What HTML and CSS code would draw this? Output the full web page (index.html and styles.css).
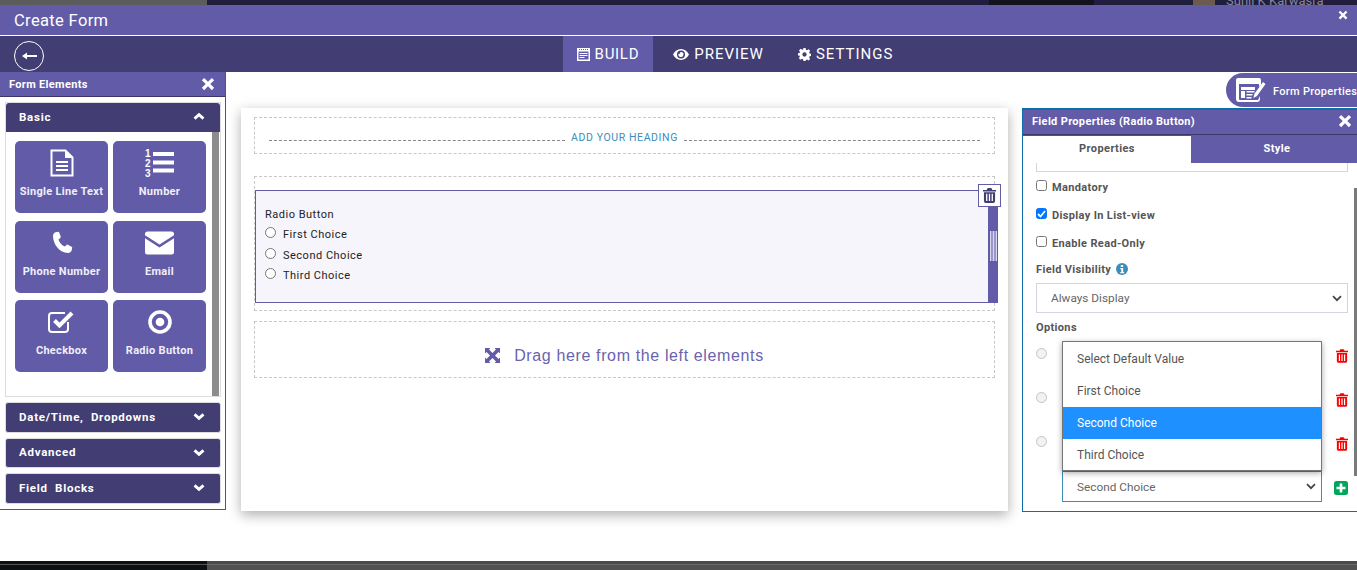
FILE: index.html
```html
<!DOCTYPE html>
<html lang="en">
<head>
<meta charset="utf-8">
<title>Create Form</title>
<link rel="stylesheet" href="styles.css">
</head>
<body>
<svg class="defs" width="0" height="0" aria-hidden="true">
  <symbol id="x" viewBox="0 0 16 16"><path d="M3.6 1 8 5.4 12.4 1 15 3.6 10.6 8 15 12.4 12.4 15 8 10.600 3.600 15 1 12.400 5.400 8 1 3.600z" fill="currentColor"/></symbol>
  <symbol id="up" viewBox="0 0 14 10"><path d="M1.800 7.500 7 2.800 12.200 7.500" fill="none" stroke="currentColor" stroke-width="3.400"/></symbol>
  <symbol id="down" viewBox="0 0 14 10"><path d="M1.800 2.500 7 7.200 12.200 2.500" fill="none" stroke="currentColor" stroke-width="3.400"/></symbol>
  <symbol id="trash" viewBox="0 0 14 16"><path fill="currentColor" d="M5 0h4l1 2h4v1.600H0V2h4zM1 4.500h12V14a2 2 0 0 1-2 2H3a2 2 0 0 1-2-2zm2.300 1.700v7.600h1.400V6.200zm3 0v7.600h1.400V6.200zm3 0v7.600h1.400V6.200z"/></symbol>
</svg>

<div class="backdrop-top">
  <span class="bt-gray"></span>
  <span class="bt-clock"></span>
  <span class="bt-avatar"></span>
  <span class="bt-name">Sunil K Karwasra</span>
</div>

<div class="modal">
  <header class="title-bar">
    <h1>Create Form</h1>
    <svg class="title-close"><use href="#x"/></svg>
  </header>
  <nav class="nav-bar">
    <button class="back" aria-label="Back">
      <svg width="15" height="10" viewBox="0 0 15 10"><path d="M15 5H2" fill="none" stroke="#fff" stroke-width="2"/><path d="M5 1.500v7L0 5z" fill="#fff"/></svg>
    </button>
    <div class="tabs">
      <a class="tab active">
        <svg width="13" height="13" viewBox="0 0 13 13"><path fill="#fff" fill-rule="evenodd" d="M0 0h13v13H0zM1.500 3.500v8h10v-8zM2.500 5h8v1h-8zm0 2h8v1h-8zm0 2h5v1h-5zM2 1v1h1V1zm2 0v1h1V1zm2 0v1h1V1zm2 0v1h1V1zm2 0v1h1V1z"/></svg>BUILD</a>
      <a class="tab">
        <svg width="16" height="11" viewBox="0 0 16 11"><path fill="#fff" fill-rule="evenodd" d="M8 0c3.500 0 6.300 2.200 8 5.500C14.300 8.800 11.500 11 8 11S1.700 8.800 0 5.500C1.700 2.200 4.500 0 8 0zm0 1.500a4 4 0 1 0 0 8 4 4 0 0 0 0-8zM8 3a2.500 2.500 0 1 1-2.300 1.500c.3.600 1.900.2 1.500-1.300.2-.1.500-.2.800-.2z"/></svg>PREVIEW</a>
      <a class="tab">
        <svg width="13" height="13" viewBox="0 0 24 24"><path fill="#fff" fill-rule="evenodd" d="M10 0h4l.7 3.300 2 .8 2.800-1.800 2.900 2.900-1.800 2.800.8 2 3.300.7v4l-3.300.7-.8 2 1.800 2.800-2.900 2.900-2.800-1.800-2 .8L14 24h-4l-.7-3.300-2-.8-2.800 1.800-2.900-2.900 1.800-2.800-.8-2L-.4 14v-4l3.300-.7.8-2L1.900 4.500l2.900-2.900 2.800 1.800 2-.8zM12 8a4 4 0 1 0 0 8 4 4 0 0 0 0-8z"/></svg>SETTINGS</a>
    </div>
  </nav>

  <div class="workspace">
    <aside class="elements">
      <div class="panel-head">
        <span>Form Elements</span>
        <svg class="panel-x"><use href="#x"/></svg>
      </div>
      <div class="accordion-open">
        <div class="acc-head"><span>Basic</span><svg class="chev"><use href="#up"/></svg></div>
        <div class="acc-body">
          <div class="grid">
            <div class="el">
              <svg width="24" height="28" viewBox="0 0 24 28"><path fill="none" stroke="#fff" stroke-width="2" d="M1.500 1.500h14l7 7v18h-21z"/><path fill="#fff" d="M15 1.500 22.500 9H15zM6 12h12v2H6zm0 4h12v2H6zm0 4h12v2H6z"/></svg>
              <span>Single Line Text</span>
            </div>
            <div class="el">
              <svg class="list-num" width="29" height="28" viewBox="0 0 29 28"><path fill="#fff" d="M8 3h21v4H8zm0 8.500h21v4H8zm0 8h21v4H8z"/><text x="0" y="7.500" class="num">1</text><text x="0" y="17.500" class="num">2</text><text x="0" y="27.500" class="num">3</text></svg>
              <span>Number</span>
            </div>
            <div class="el">
              <svg width="24" height="24" viewBox="0 0 24 24"><path fill="#fff" d="M5.500 1.200 8 .8c.6 0 1 .3 1.200.8l1.500 4c.2.500 0 1-.4 1.300L8.500 8.500c.8 2.800 3.500 6 6.300 7.100l1.700-1.700c.4-.4.900-.5 1.400-.2l3.700 2c.5.300.7.800.6 1.300l-.6 2.500c-.4 1.400-2 2.500-3.600 2.500C9.500 22 3 13 3 5c0-1.800 1-3.300 2.500-3.800z"/></svg>
              <span>Phone Number</span>
            </div>
            <div class="el">
              <svg width="29" height="23" viewBox="0 0 29 23"><path fill="#fff" d="M2.500 0h24A2.500 2.500 0 0 1 29 2.500v1.300L14.500 13 0 3.800V2.500A2.500 2.500 0 0 1 2.500 0zM0 6.800l14.500 9.200L29 6.800v13.700a2.500 2.500 0 0 1-2.500 2.500h-24A2.500 2.500 0 0 1 0 20.500z"/></svg>
              <span>Email</span>
            </div>
            <div class="el">
              <svg width="27" height="24" viewBox="0 0 27 24"><path fill="none" stroke="#fff" stroke-width="2" d="M20 12v7a3 3 0 0 1-3 3H4a3 3 0 0 1-3-3V6a3 3 0 0 1 3-3h13"/><path fill="none" stroke="#fff" stroke-width="4" d="m6.500 10.500 5 5L24 3"/></svg>
              <span>Checkbox</span>
            </div>
            <div class="el">
              <svg width="24" height="24" viewBox="0 0 24 24"><circle cx="12" cy="12" r="10" fill="none" stroke="#fff" stroke-width="3.600"/><circle cx="12" cy="12" r="4.300" fill="#fff"/></svg>
              <span>Radio Button</span>
            </div>
          </div>
          <div class="el-scroll"></div>
        </div>
      </div>
      <div class="acc-closed"><span>Date/Time,&nbsp; Dropdowns</span><svg class="chev"><use href="#down"/></svg></div>
      <div class="acc-closed short"><span>Advanced</span><svg class="chev"><use href="#down"/></svg></div>
      <div class="acc-closed"><span>Field&nbsp; Blocks</span><svg class="chev"><use href="#down"/></svg></div>
    </aside>

    <main class="canvas">
      <section class="sheet">
        <div class="heading-zone">
          <i class="dash"></i><span>ADD YOUR HEADING</span><i class="dash"></i>
        </div>
        <div class="field-zone">
          <div class="field">
            <div class="field-main">
              <div class="field-label">Radio Button</div>
              <label class="choice"><i class="ring"></i>First Choice</label>
              <label class="choice"><i class="ring"></i>Second Choice</label>
              <label class="choice"><i class="ring"></i>Third Choice</label>
            </div>
            <div class="handle"><i class="grip"></i></div>
            <button class="field-del" aria-label="Delete"><svg width="13" height="15"><use href="#trash"/></svg></button>
          </div>
        </div>
        <div class="drop-zone">
          <svg width="15" height="15" viewBox="0 0 15 15"><path fill="#625ba8" d="M0 0h5.500L4 1.500 7.500 5 10.900 1.500 9.500 0H15v5.500L13.500 4 10 7.500l3.500 3.500L15 9.500V15H9.500l1.500-1.500L7.500 10 4 13.500 5.500 15H0V9.500L1.500 11 5 7.500 1.500 4 0 5.500z"/></svg>
          <span>Drag here from the left elements</span>
        </div>
      </section>
    </main>

    <div class="right-col">
      <button class="form-props">
        <svg width="30" height="26" viewBox="0 0 30 26"><path fill="#fff" fill-rule="evenodd" d="M2 1h21a2 2 0 0 1 2 2v5l-2 2V7H3v15a1 1 0 0 0 1 1h18l2-4v3a3 3 0 0 1-3 3H3a3 3 0 0 1-3-3V3a2 2 0 0 1 2-2z"/><path fill="#fff" d="M5 10h14v3H5zm0 4h4v7H5zm5.500 0h8v1.500h-8zm0 3h6v1.500h-6zm0 3h5v1.500h-5z"/><path fill="#fff" d="M27 5l2.500 2-8.500 12-3.500 2 .8-4zM14 3h1.500v1.500H14zm3 0h1.500v1.500H17zm3 0h1.500v1.500H20z"/></svg>
        <span>Form Properties</span>
      </button>
      <aside class="props">
        <div class="props-head">
          <span>Field Properties (Radio Button)</span>
          <svg class="panel-x"><use href="#x"/></svg>
        </div>
        <div class="props-tabs">
          <div class="ptab active">Properties</div>
          <div class="ptab">Style</div>
        </div>
        <div class="props-body">
          <div class="cut-input"></div>
          <label class="check first"><i class="box"></i>Mandatory</label>
          <label class="check"><i class="box on"><svg width="9" height="8" viewBox="0 0 9 8"><path d="m1 4 2.500 2.500L8 1" fill="none" stroke="#fff" stroke-width="1.800"/></svg></i>Display In List-view</label>
          <label class="check"><i class="box"></i>Enable Read-Only</label>
          <div class="vis-label">Field Visibility
            <svg width="12" height="12" viewBox="0 0 12 12"><circle cx="6" cy="6" r="6" fill="#3c8dbc"/><path fill="#fff" d="M4.800 2h2.400v2H4.800zM4.300 5h2.900v4h1v1.300H4.300V9h1V6.300h-1z"/></svg>
          </div>
          <div class="select wide"><span>Always Display</span><svg width="10" height="7" viewBox="0 0 10 7"><path d="M1 1.200 5 5.200 9 1.200" fill="none" stroke="#444" stroke-width="1.700"/></svg></div>
          <div class="opt-label">Options</div>
          <div class="options">
            <div class="opt-radios"><i class="ghost"></i><i class="ghost"></i><i class="ghost"></i></div>
            <div class="opt-trash">
              <svg width="12" height="14"><use href="#trash"/></svg>
              <svg width="12" height="14"><use href="#trash"/></svg>
              <svg width="12" height="14"><use href="#trash"/></svg>
            </div>
            <div class="select current"><span>Second Choice</span><svg width="10" height="7" viewBox="0 0 10 7"><path d="M1 1.200 5 5.200 9 1.200" fill="none" stroke="#444" stroke-width="1.700"/></svg></div>
            <svg class="add" width="14" height="14" viewBox="0 0 14 14"><rect width="14" height="14" rx="2.500" fill="#00a65a"/><path d="M5.700 2.500h2.600v3.200h3.200v2.600H8.300v3.200H5.700V8.300H2.500V5.700h3.200z" fill="#fff"/></svg>
            <ul class="dropdown">
              <li>Select Default Value</li>
              <li>First Choice</li>
              <li class="sel">Second Choice</li>
              <li>Third Choice</li>
            </ul>
          </div>
          <div class="props-scroll"></div>
        </div>
      </aside>
    </div>
  </div>
</div>

<div class="backdrop-bottom"><span></span></div>
</body>
</html>
```

FILE: styles.css
```css
* { box-sizing: border-box; }
html, body { margin: 0; height: 570px; overflow: hidden; background: #fff; }
body { font-family: Roboto, "Liberation Sans", sans-serif; display: flex; flex-direction: column; color: #444; }
.defs { position: absolute; }
i { display: block; font-style: normal; }

.backdrop-top { height: 5px; background: #201d3e; display: flex; flex: none; overflow: hidden; align-items: flex-end; }
.bt-gray { width: 207px; height: 5px; background: #5c5c5c; flex: none; }
.bt-clock { width: 105px; height: 5px; margin-left: 782px; background: #15121f; flex: none; }
.bt-avatar { width: 22px; height: 5px; margin-left: 99px; background: #6a5a50; flex: none; }
.bt-name { margin-left: 11px; font-size: 13px; line-height: 5px; height: 5px; color: #86849e; white-space: nowrap; position: relative; top: -2px; flex: none; }

.modal { flex: 1; display: flex; flex-direction: column; min-height: 0; }

.title-bar { height: 30px; background: #625ba8; display: flex; align-items: center; justify-content: space-between; padding: 0 9px 0 14px; flex: none; }
.title-bar h1 { margin: 0; font-size: 16.500px; font-weight: 400; color: #fff; font-family: Roboto, sans-serif; letter-spacing: .35px; }
.title-close { width: 10px; height: 10px; color: #fff; margin-top: -10px; }

.nav-bar { height: 37px; background: #423d72; border-top: 1px solid #fff; position: relative; display: flex; justify-content: center; padding-left: 120px; flex: none; }
.back { position: absolute; left: 14px; top: 5px; width: 30px; height: 30px; border: 1px solid #fff; border-radius: 50%; background: none; padding: 0; display: flex; align-items: center; justify-content: center; }
.tabs { display: flex; }
.tab { display: flex; align-items: center; gap: 5px; padding: 0 13.500px; color: #fff; font-size: 15px; letter-spacing: 1px; margin-right: 7px; }
.tab.active { background: #625ba8; letter-spacing: .7px; }

.workspace { flex: 1; display: flex; min-height: 0; align-items: flex-start; }

.elements { width: 226px; height: 438px; flex: none; border-right: 1px solid #0f6ea6; border-bottom: 1px solid #0f6ea6; background: #fff; }
.panel-head { height: 25px; background: #625ba8; border-bottom: 1px solid #3b3768; display: flex; align-items: center; justify-content: space-between; padding: 0 10px 0 9px; color: #fff; font-weight: 700; font-size: 11px; letter-spacing: .33px; }
.panel-x { width: 14px; height: 14px; color: #fff; }

.accordion-open { margin: 5px 4px 0 5px; border: 1px solid #ddd; }
.acc-head { height: 29px; background: #423d72; color: #fff; display: flex; align-items: center; justify-content: space-between; padding: 0 15px 2px 13px; font-weight: 700; font-size: 11.500px; letter-spacing: .75px; border-radius: 3px 3px 0 0; }
.chev { width: 12px; height: 9px; color: #fff; }
.acc-body { height: 264px; display: flex; justify-content: space-between; padding: 9px 1px 0 9px; background: #fff; }
.grid { display: grid; grid-template-columns: 93px 93px; grid-auto-rows: 72px; column-gap: 5px; row-gap: 7.500px; align-content: start; }
.el { background: #625ba8; border-radius: 5px; color: #fff; font-size: 11px; font-weight: 700; letter-spacing: .3px; display: flex; flex-direction: column; align-items: center; }
.el svg { height: 28px; margin-top: 8px; margin-bottom: 8px; flex: none; }
.el svg.list-num { overflow: visible; }
.el span { line-height: 14px; white-space: nowrap; color: #f0eff8; }
.num { font-family: "Liberation Sans", sans-serif; font-weight: 700; font-size: 10px; fill: #fff; letter-spacing: 0; }
.el-scroll { width: 7px; background: #8c8c8c; margin-top: -9px; }

.acc-closed { margin: 5px 4px 0 5px; height: 31px; background: #423d72; border: 1px solid #ddd; border-radius: 3px; color: #fff; display: flex; align-items: center; justify-content: space-between; padding: 0 15px 2px 13px; font-weight: 700; font-size: 11.500px; letter-spacing: .75px; flex: none; }
.acc-closed.short { height: 30px; }

.canvas { flex: 1; padding: 36px 14px 0 15px; min-width: 0; }
.sheet { height: 403px; background: #fff; box-shadow: 0 4px 12px rgba(0,0,0,.32); padding: 9px 13px 0; display: flex; flex-direction: column; }
.heading-zone { height: 37px; border: 1px dashed #c8c8c8; display: flex; align-items: center; gap: 6px; padding: 6px 14px 0; color: #3c8dbc; font-size: 10.500px; letter-spacing: .6px; flex: none; }
.heading-zone span { white-space: nowrap; padding: 0 0 2px; }
.dash { flex: 1; border-top: 1px dashed #888; margin-top: 6px; margin-bottom: 2px; }
.field-zone { margin-top: 22px; height: 135px; border: 1px dashed #c8c8c8; padding-top: 13px; flex: none; }
.field { height: 113px; display: flex; position: relative; margin-right: -4px; border: 1px solid #625ba8; border-right: 0; background: #f6f5fb; }
.field-main { flex: 1; padding: 17px 9px 0; color: #222; font-size: 11px; letter-spacing: .5px; }
.field-label { line-height: 13px; margin-bottom: 5px; }
.choice { display: flex; align-items: flex-start; gap: 7px; height: 20.500px; line-height: 17px; }
.ring { width: 11px; height: 11px; border: 1px solid #767676; border-radius: 50%; background: #fff; margin-top: 1px; }
.handle { width: 10px; background: #625ba8; display: flex; align-items: center; justify-content: center; margin-top: -1px; }
.grip { width: 7px; height: 30px; background: repeating-linear-gradient(90deg, #d9d7ec 0 1px, #9b96cc 1px 3px); }
.field-del { position: absolute; right: -3px; top: -7px; width: 23px; height: 23px; background: #fff; border: 1px solid #625ba8; color: #423d72; padding: 0; display: flex; align-items: center; justify-content: center; }
.drop-zone { margin-top: 10px; height: 57px; border: 1px dashed #c8c8c8; display: flex; align-items: center; justify-content: center; gap: 14px; padding-top: 12px; color: #6a63ad; font-family: "Liberation Sans", sans-serif; font-size: 16px; letter-spacing: .63px; flex: none; }

.right-col { width: 335px; flex: none; display: flex; flex-direction: column; align-items: flex-end; }
.form-props { margin-top: 1px; width: 131px; height: 34px; background: #625ba8; border: 0; border-radius: 17px 0 0 17px; color: #fff; display: flex; align-items: center; padding: 0 0 0 10px; gap: 7px; font-family: Roboto, sans-serif; font-size: 11px; font-weight: 500; letter-spacing: .3px; white-space: nowrap; overflow: hidden; }
.form-props svg { flex: none; }
.form-props span { padding-top: 2px; }
.props { margin-top: 1px; width: 335px; height: 404px; border: 1px solid #0f6ea6; border-right: 0; border-top-width: 2px; display: flex; flex-direction: column; background: #fff; }
.props-head { height: 25px; background: #625ba8; border-bottom: 1px solid #3b3768; display: flex; align-items: center; justify-content: space-between; padding: 0 5px 2px 9px; color: #fff; font-weight: 700; font-size: 11px; letter-spacing: .33px; flex: none; }
.props-tabs { display: flex; height: 28px; flex: none; }
.ptab { flex: 1; display: flex; align-items: center; justify-content: center; padding: 0 0 2px 6px; font-size: 11px; font-weight: 700; background: #625ba8; color: #fff; letter-spacing: .4px; }
.ptab.active { flex: none; width: 168px; padding-left: 0; background: #fff; color: #555; border-top: 1px solid #0f6ea6; }
.props-body { position: relative; flex: 1; padding: 0 9px 0 13px; font-size: 11px; color: #555; min-height: 0; }
.cut-input { height: 9px; border: 1px solid #d2d6de; border-top: 0; }
.check { display: flex; align-items: flex-start; gap: 5px; height: 28px; font-weight: 700; font-size: 11px; letter-spacing: .35px; line-height: 14px; }
.check.first { margin-top: 9px; }
.box { width: 11px; height: 11px; border: 1px solid #767676; border-radius: 2.500px; background: #fff; flex: none; display: flex; align-items: center; justify-content: center; margin-top: -1px; }
.box.on { background: #0075ff; border-color: #0075ff; }
.vis-label { font-weight: 700; display: flex; align-items: center; gap: 5px; letter-spacing: .35px; height: 14px; margin-top: -3px; }
.select { display: flex; align-items: center; justify-content: space-between; border: 1px solid #d2d6de; font-size: 11.800px; color: #666; background: #fff; }
.wide { height: 30px; margin-top: 7px; padding: 0 5px 0 14px; }
.opt-label { font-weight: 700; letter-spacing: .35px; margin-top: 8px; line-height: 14px; }
.options { position: relative; height: 172px; margin-top: 6px; }
.opt-radios i { position: absolute; left: 0; width: 11px; height: 11px; border-radius: 50%; background: #f2f2f2; border: 1px solid #c4c4c4; }
.opt-radios i:nth-child(1) { top: 7px; }
.opt-radios i:nth-child(2) { top: 51px; }
.opt-radios i:nth-child(3) { top: 95px; }
.opt-trash svg { position: absolute; right: 0; color: #f00; }
.opt-trash svg:nth-child(1) { top: 8px; }
.opt-trash svg:nth-child(2) { top: 52px; }
.opt-trash svg:nth-child(3) { top: 96px; }
.current { position: absolute; left: 26px; top: 130px; width: 260px; height: 31px; border-color: #3c8dbc; padding: 0 5px 0 14px; }
.add { position: absolute; right: 0; top: 140px; }
.dropdown { position: absolute; left: 26px; top: 0; width: 260px; height: 130px; margin: 0; padding: 1px 0 0; list-style: none; background: #fff; border: 1px solid #767676; box-shadow: 0 2px 6px rgba(0,0,0,.35); font-size: 12px; color: #555; }
.dropdown li { height: 32px; line-height: 32px; padding-left: 14px; }
.dropdown li.sel { background: #1e90ff; color: #fff; }
.props-scroll { position: absolute; right: 0; top: 25px; width: 3px; height: 288px; background: #7a7a7a; }

.backdrop-bottom { height: 9px; background: linear-gradient(#4a4a4a 0 3px, #6a6a6a 3px 4px, #515151 4px); flex: none; }
.backdrop-bottom span { display: block; width: 207px; height: 100%; background: linear-gradient(#0d1113 0 3px, #555 3px 4px, #0d1113 4px); }
```
